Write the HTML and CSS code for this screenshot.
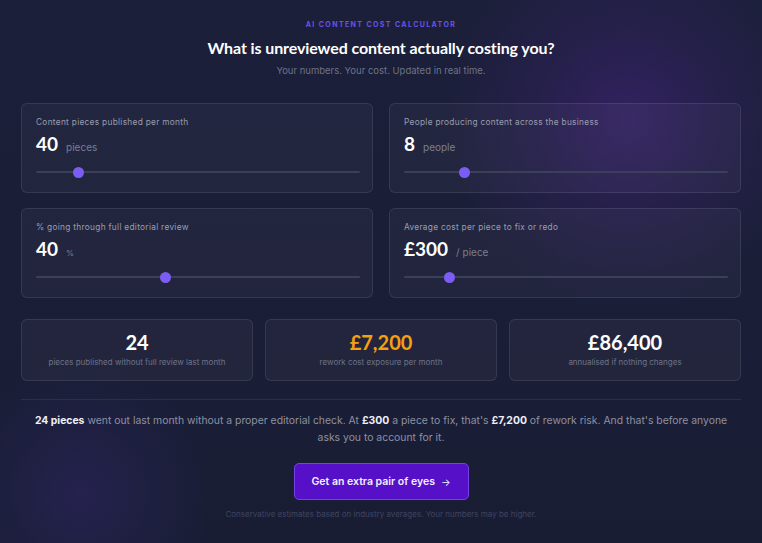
FILE: index.html
```html
<!DOCTYPE html>
<html lang="en">
<head>
<meta charset="utf-8">
<title>AI Content Cost Calculator</title>
<link rel="stylesheet" href="styles.css">
</head>
<body>
<div class="page">
  <main class="wrap">
    <header class="head">
      <div class="eyebrow">AI CONTENT COST CALCULATOR</div>
      <h1 class="title">What is unreviewed content actually costing you?</h1>
      <p class="sub">Your numbers. Your cost. Updated in real time.</p>
    </header>

    <section class="inputs">
      <div class="card">
        <div class="label">Content pieces published per month</div>
        <div class="value"><span class="num">40</span><span class="unit">pieces</span></div>
        <div class="slider"><div class="track"></div><div class="thumb" style="left:13%"></div></div>
      </div>
      <div class="card">
        <div class="label">People producing content across the business</div>
        <div class="value"><span class="num">8</span><span class="unit">people</span></div>
        <div class="slider"><div class="track"></div><div class="thumb" style="left:18.8%"></div></div>
      </div>
      <div class="card">
        <div class="label">% going through full editorial review</div>
        <div class="value"><span class="num">40</span><span class="unit small">%</span></div>
        <div class="slider"><div class="track"></div><div class="thumb" style="left:40%"></div></div>
      </div>
      <div class="card">
        <div class="label">Average cost per piece to fix or redo</div>
        <div class="value"><span class="num">£300</span><span class="unit">/ piece</span></div>
        <div class="slider"><div class="track"></div><div class="thumb" style="left:13.9%"></div></div>
      </div>
    </section>

    <section class="results">
      <div class="res">
        <div class="res-num">24</div>
        <div class="res-cap">pieces published without full review last month</div>
      </div>
      <div class="res">
        <div class="res-num accent">£7,200</div>
        <div class="res-cap">rework cost exposure per month</div>
      </div>
      <div class="res">
        <div class="res-num">£86,400</div>
        <div class="res-cap">annualised if nothing changes</div>
      </div>
    </section>

    <div class="divider"></div>

    <p class="summary"><strong>24 pieces</strong> went out last month without a proper editorial check. At <strong>£300</strong> a piece to fix, that's <strong>£7,200</strong> of rework risk. And that's before anyone asks you to account for it.</p>

    <div class="cta-row">
      <a class="cta" href="#">Get an extra pair of eyes <span class="arrow">→</span></a>
    </div>

    <p class="foot">Conservative estimates based on industry averages. Your numbers may be higher.</p>
  </main>
</div>
</body>
</html>
```

FILE: styles.css
```css
* { box-sizing: border-box; }
html, body { margin: 0; padding: 0; }
body {
  background: #1a1e36;
  font-family: "Inter", "Liberation Sans", sans-serif;
  color: #fff;
}
.page {
  min-height: 543px;
  background:
    radial-gradient(circle at 628px 120px, rgba(70, 36, 130, 0.55) 0, rgba(70, 36, 130, 0.25) 90px, rgba(70, 36, 130, 0) 190px),
    radial-gradient(circle at 80px 495px, rgba(50, 40, 110, 0.45) 0, rgba(50, 40, 110, 0) 130px),
    linear-gradient(180deg, #1b1f39 0%, #191d34 100%);
  padding-top: 19px;
}
.wrap {
  width: 720px;
  margin: 0 auto;
}
.head { text-align: center; }
.eyebrow {
  font-size: 7px;
  line-height: 12px;
  letter-spacing: 1.4px;
  font-weight: 700;
  color: #6b52e6;
}
.title {
  margin: 5px 0 0;
  font-family: "Lato", "Liberation Sans", sans-serif;
  font-weight: 700;
  font-size: 16px;
  line-height: 24px;
  letter-spacing: -0.1px;
  color: #fff;
}
.sub {
  margin: 4px 0 0;
  font-size: 9.5px;
  line-height: 14px;
  color: #6e7388;
}
.inputs {
  margin-top: 25px;
  display: grid;
  grid-template-columns: 352px 352px;
  column-gap: 16px;
  row-gap: 15px;
}
.card {
  height: 90px;
  border: 1px solid rgba(255, 255, 255, 0.09);
  background: rgba(255, 255, 255, 0.035);
  border-radius: 6px;
  padding: 12px 12px 13px 14px;
}
.label {
  font-size: 8.3px;
  line-height: 12px;
  letter-spacing: 0.3px;
  color: #9a9eb0;
}
.value {
  margin-top: 5px;
  height: 22px;
  display: flex;
  align-items: baseline;
}
.num {
  font-family: "Lato", "Liberation Sans", sans-serif;
  font-weight: 700;
  font-size: 19px;
  line-height: 22px;
  color: #fff;
}
.unit {
  margin-left: 8px;
  font-size: 10px;
  color: #7a7f93;
}
.unit.small { font-size: 8px; }
.slider {
  position: relative;
  margin-top: 11px;
  height: 12px;
}
.track {
  position: absolute;
  left: 0; right: 0; top: 5px;
  height: 2px;
  border-radius: 1px;
  background: #3b3f57;
}
.thumb {
  position: absolute;
  top: 0.5px;
  width: 11px;
  height: 11px;
  margin-left: -5.5px;
  border-radius: 50%;
  background: #7b5cf5;
}
.results {
  margin-top: 21px;
  display: grid;
  grid-template-columns: repeat(3, 232px);
  column-gap: 12px;
}
.res {
  height: 62px;
  border: 1px solid rgba(255, 255, 255, 0.09);
  background: rgba(255, 255, 255, 0.04);
  border-radius: 6px;
  text-align: center;
  padding-top: 10px;
}
.res-num {
  font-family: "Lato", "Liberation Sans", sans-serif;
  font-weight: 700;
  font-size: 20px;
  line-height: 24px;
  color: #fff;
}
.res-num.accent { color: #f5a011; }
.res-cap {
  margin-top: 2px;
  font-size: 8px;
  line-height: 12px;
  color: #6e7388;
}
.divider {
  margin-top: 18px;
  height: 1px;
  background: rgba(255, 255, 255, 0.08);
}
.summary {
  margin: 12px auto 0;
  width: 710px;
  text-align: center;
  font-size: 10.4px;
  line-height: 17px;
  color: #8d91a3;
}
.summary strong { color: #eef0f6; font-weight: 700; }
.cta-row {
  margin-top: 17px;
  display: flex;
  justify-content: center;
}
.cta {
  display: flex;
  align-items: center;
  justify-content: center;
  width: 175px;
  height: 37px;
  background: #5510c8;
  border: 1px solid #7541e6;
  border-radius: 5px;
  color: #f3efff;
  font-size: 10.5px;
  font-weight: 600;
  text-decoration: none;
}
.arrow { margin-left: 6px; font-size: 10px; font-weight: 400; }
.foot {
  margin: 8px 0 0;
  text-align: center;
  font-size: 8px;
  line-height: 12px;
  color: #3f4460;
}
```
